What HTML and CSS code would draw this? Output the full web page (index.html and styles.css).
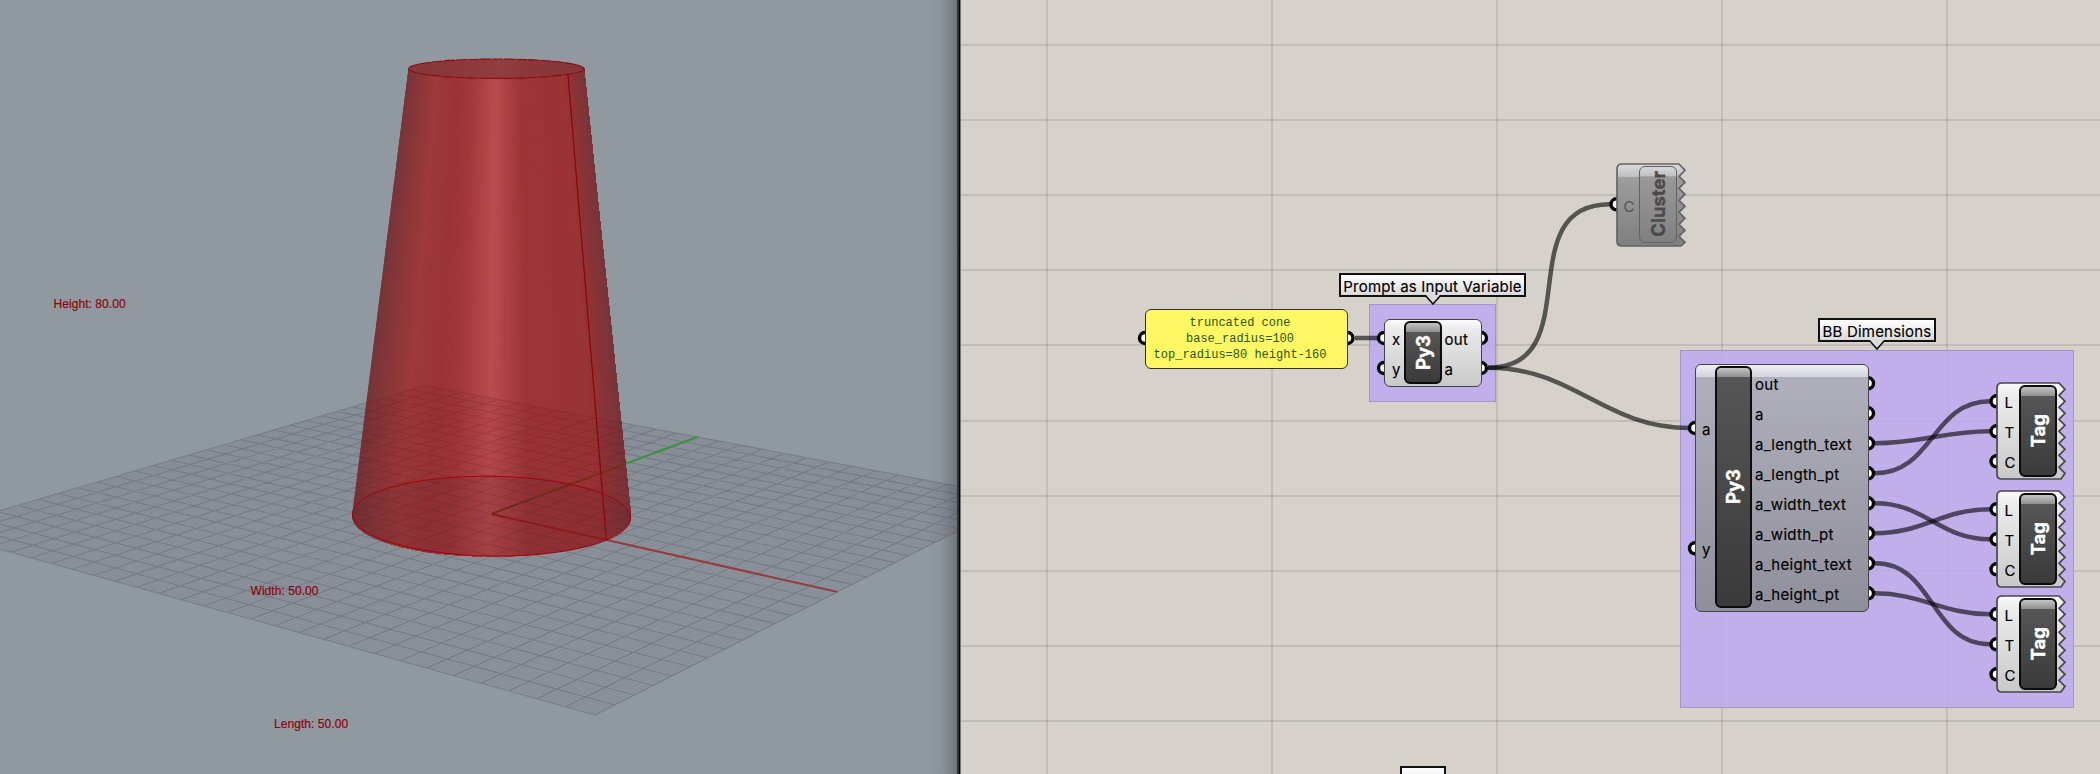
FILE: index.html
```html
<!DOCTYPE html>
<html lang="en">
<head>
<meta charset="utf-8">
<title>Viewport and node canvas</title>
<link rel="stylesheet" href="styles.css">
</head>
<body>
<main class="workspace">
  <section class="viewport">
    <svg class="scene" id="scene" width="957" height="774" viewBox="0 0 957 774">
      <defs>
        <clipPath id="coneClip"><path d="M408.5 68.5 A88 9.7 0 0 1 584 68.5 L631 516 A139.5 40.5 0 0 1 352 516 Z"/></clipPath>
        <linearGradient id="mouth" x1="0" x2="1"><stop offset="0" stop-color="#84383b"/><stop offset=".3" stop-color="#8d373a"/><stop offset=".52" stop-color="#903e41"/><stop offset=".7" stop-color="#8b373a"/><stop offset="1" stop-color="#84373a"/></linearGradient>
      </defs>
      <g id="floor"></g>
      <path id="axisX" class="axis-x"/>
      <path id="axisY" class="axis-y"/>
      <g id="shell" clip-path="url(#coneClip)"></g>
      <g clip-path="url(#coneClip)">
        <g id="floorInside" class="floor-inside"></g>
        <path id="axisXin" class="axis-x-in"/>
        <path id="axisYin" class="axis-y-in"/>
      </g>
      <ellipse cx="496.2" cy="68.7" rx="87.8" ry="9.7" fill="url(#mouth)"/>
      <path id="baseRing" class="base"/>
      <ellipse class="rim" cx="496.2" cy="68.7" rx="87.8" ry="9.7"/>
      <path class="seam" d="M568 74.5 L606.3 539.5"/>
    </svg>
    <span class="tag-text tag-height">Height: 80.00</span>
    <span class="tag-text tag-width">Width: 50.00</span>
    <span class="tag-text tag-length">Length: 50.00</span>
    <div class="edge-shadow"></div>
  </section>
  <div class="divider"></div>
  <section class="canvas">
    <svg class="layer" id="canvasGrid" width="1139" height="774" viewBox="961 0 1139 774"></svg>
    <div class="group group-prompt"></div>
    <div class="group group-dims"></div>
    <svg class="layer" id="wires" width="1139" height="774" viewBox="961 0 1139 774">
      <g class="wire">
        <path d="M1355 338H1378"/>
        <path d="M1488 367.7C1590 367.7 1508 204.3 1610 204.3"/>
        <path d="M1488 367.7C1575 367.7 1603 428 1690 428"/>
        <path d="M1875 443.3C1920 443.3 1945 431.3 1990 431.3"/>
        <path d="M1875 473.3C1933 473.3 1932 401.3 1990 401.3"/>
        <path d="M1875 503.3C1926 503.3 1939 539.3 1990 539.3"/>
        <path d="M1875 533.3C1923 533.3 1942 509.3 1990 509.3"/>
        <path d="M1875 563.3C1935 563.3 1930 644.3 1990 644.3"/>
        <path d="M1875 593.3C1921 593.3 1944 614.3 1990 614.3"/>
      </g>
      <g class="grip" id="grips"></g>
    </svg>

    <div class="callout callout-prompt">Prompt as Input Variable<svg class="tip" width="18" height="11"><path d="M1 0L9 9L17 0"/></svg></div>
    <div class="callout callout-dims">BB Dimensions<svg class="tip" width="18" height="11"><path d="M1 0L9 9L17 0"/></svg></div>
    <div class="callout callout-empty"></div>

    <div class="panel"><span>truncated cone</span><span>base_radius=100</span><span>top_radius=80 height-160</span></div>

    <div class="node node-py">
      <div class="ports ports-in"><span>x</span><span>y</span></div>
      <div class="badge"><b>Py3</b></div>
      <div class="ports ports-out"><span>out</span><span>a</span></div>
    </div>

    <div class="node node-dims">
      <div class="ports ports-in"><span>a</span><span>y</span></div>
      <div class="badge"><b>Py3</b></div>
      <div class="ports ports-out"><span>out</span><span>a</span><span>a_length_text</span><span>a_length_pt</span><span>a_width_text</span><span>a_width_pt</span><span>a_height_text</span><span>a_height_pt</span></div>
    </div>

    <div class="torn cluster">
      <svg class="torn-shape" width="71" height="85"><defs><linearGradient id="gc" x2="0" y2="1"><stop offset="0" stop-color="#dcdcdc"/><stop offset=".155" stop-color="#bebebe"/><stop offset=".155" stop-color="#9d9d9d"/><stop offset="1" stop-color="#7f7f7f"/></linearGradient></defs><path fill="url(#gc)" stroke="#646464" data-tips="7" data-h="83"/></svg>
      <div class="ports ports-in"><span>C</span></div>
      <div class="badge"><b>Cluster</b></div>
    </div>

    <div class="torn tag tag-1">
      <svg class="torn-shape" width="71" height="99"><defs><linearGradient id="gt" x2="0" y2="1"><stop offset="0" stop-color="#fbfbfb"/><stop offset=".13" stop-color="#ececec"/><stop offset="1" stop-color="#c9c9c9"/></linearGradient></defs><path fill="url(#gt)" stroke="#484848" data-tips="8" data-h="97"/></svg>
      <div class="ports ports-in"><span>L</span><span>T</span><span>C</span></div>
      <div class="badge"><b>Tag</b></div>
    </div>
    <div class="torn tag tag-2">
      <svg class="torn-shape" width="71" height="99"><path fill="url(#gt)" stroke="#484848" data-tips="8" data-h="97"/></svg>
      <div class="ports ports-in"><span>L</span><span>T</span><span>C</span></div>
      <div class="badge"><b>Tag</b></div>
    </div>
    <div class="torn tag tag-3">
      <svg class="torn-shape" width="71" height="99"><path fill="url(#gt)" stroke="#484848" data-tips="8" data-h="97"/></svg>
      <div class="ports ports-in"><span>L</span><span>T</span><span>C</span></div>
      <div class="badge"><b>Tag</b></div>
    </div>
  </section>
</main>
<script src="scene.js"></script>
</body>
</html>
```
FILE: styles.css
```css
* { box-sizing: border-box; }
body { margin: 0; overflow: hidden; font-family: Inter, "Liberation Sans", sans-serif; }
.workspace { display: flex; width: 2100px; height: 774px; }

/* 3D viewport */
.viewport { position: relative; flex: 0 0 957px; background: #9199a0; overflow: hidden; }
.scene { display: block; }
.plane { fill: #899099; fill-opacity: .75; }
.minor { fill: none; stroke: #747a84; stroke-width: 1; opacity: .1; }
.major { fill: none; stroke: #686c77; stroke-width: 1.1; opacity: .6; }
.floor-inside .plane { fill: #7a1a20; fill-opacity: .08; }
.floor-inside .minor { display: none; }
.floor-inside .major { stroke: #5a1c24; opacity: .2; }
.axis-x { stroke: #933c3d; stroke-width: 2; }
.axis-y { stroke: #3c923f; stroke-width: 2; }
.axis-x-in { stroke: #941a1d; stroke-width: 2; }
.axis-y-in { stroke: #743016; stroke-width: 2; }
.base { fill: rgba(90, 40, 48, .17); stroke: #a00408; stroke-width: 1; }
.rim { fill: none; stroke: #8f0a10; stroke-width: 1.1; stroke-dasharray: 11 1; }
.seam { stroke: #900207; stroke-width: 1.2; }
.tag-text { position: absolute; font: 12px/14px "Liberation Sans", Arial, sans-serif; color: #8c060c; -webkit-text-stroke: .2px #8c060c; letter-spacing: .06px; white-space: nowrap; }
.tag-height { left: 53.5px; top: 297px; }
.tag-width { left: 250.5px; top: 584px; }
.tag-length { left: 274px; top: 717px; }
.edge-shadow { position: absolute; inset: 0 0 0 auto; width: 30px; background: linear-gradient(90deg, rgba(70, 72, 82, 0), rgba(70, 72, 82, .1) 50%, rgba(60, 62, 72, .38)); }

.divider { flex: 0 0 4px; background: linear-gradient(90deg, #303234 2px, #000 2px, #000 3px, #77756f 3px); }

/* Node canvas: every node is placed on the free canvas */
.canvas { position: relative; flex: 1; background: #d6d2cb; overflow: hidden; }
.layer { position: absolute; left: 0; top: 0; }
#canvasGrid line { stroke: #000; stroke-opacity: .1; stroke-width: 2; }
.group { position: absolute; background: rgba(189, 170, 238, .88); border: 1.5px solid #a294c4; }
.group-prompt { left: 408px; top: 304px; width: 127px; height: 98px; }
.group-dims { left: 719px; top: 349.5px; width: 394px; height: 358.5px; }
.wire path { fill: none; stroke: #000; stroke-opacity: .6; stroke-width: 4.5; }
.grip circle { fill: #fff; stroke: #000; stroke-width: 3.4; }

.callout { position: absolute; display: flex; align-items: center; justify-content: center; height: 24px; padding-top: 3px; border: 2px solid #111; background: linear-gradient(#fff, #d9d9d9); font-size: 15px; letter-spacing: .2px; color: #000; -webkit-text-stroke: .15px #000; white-space: nowrap; }
.callout-prompt { left: 378px; top: 273px; width: 187px; }
.callout-dims { left: 857px; top: 318px; width: 118px; }
.callout-empty { left: 439px; top: 766px; width: 46px; }
.tip { position: absolute; left: 50%; top: 20px; margin-left: -9px; }
.tip path { fill: #dcdcdc; stroke: #111; stroke-width: 1.6; }

.panel { position: absolute; left: 184px; top: 309px; width: 203px; height: 59.5px; display: flex; flex-direction: column; align-items: center; padding: 4.5px 13px 0 0; border: 1.5px solid #33321c; border-radius: 6px; background: #fff763; font: 12px/16.4px "Liberation Mono", "Courier New", monospace; color: #2b5712; white-space: pre; }

.node { position: absolute; display: flex; border: 1.6px solid #444; border-radius: 6px; }
.node-py { left: 423px; top: 319px; width: 97.5px; height: 68px; background: linear-gradient(#fbfbfb, #e9e9e9 17%, #c9c9c9); }
.node-dims { left: 733.5px; top: 364px; width: 174px; height: 248px; background: linear-gradient(#efeff4 0, #d3d3dc 12px, #b0b0bd 12px, #8f8f9c); }
.ports { display: flex; flex-direction: column; font-size: 15px; color: #000; letter-spacing: .28px; -webkit-text-stroke: .15px currentColor; }
.ports span { height: 30px; line-height: 30px; }
.node-py .ports-in { width: 19px; padding: 5px 0 0 7px; }
.node-py .ports-out { padding: 5px 0 0 3px; }
.node-dims .ports-in { width: 19px; padding: 50px 0 0 6.5px; gap: 90px; }
.node-dims .ports-out { padding: 5px 0 0 3px; }
.badge { flex: none; display: flex; align-items: center; justify-content: center; width: 37.5px; border: 2px solid #0c0c0c; border-radius: 6px; background: linear-gradient(#c4c4c4 0, #8f8f8f 9px, #565656 9px, #3a3a3a); }
.badge b { writing-mode: vertical-rl; transform: rotate(180deg); font-size: 18.5px; line-height: 22px; font-weight: 700; -webkit-text-stroke: .4px currentColor; color: #fff; }
.node-py .badge { height: 63px; margin-top: 1px; }
.node-dims .badge { height: 242px; margin-top: 1px; }

.torn { position: absolute; display: flex; }
.torn-shape { position: absolute; left: 0; top: 0; }
.torn-shape path { stroke-width: 1.7; }
.torn .ports, .torn .badge { position: relative; }
.torn .ports-in { width: 23px; padding: 6px 0 0 8.5px; }
.torn .badge { height: 91.5px; margin-top: 3px; }
.tag { left: 1035px; height: 99px; }
.tag-1 { top: 382px; }
.tag-2 { top: 490px; }
.tag-3 { top: 595px; }
.cluster { left: 655px; top: 162.5px; height: 85px; }
.torn.cluster .ports-in { padding: 29px 0 0 7.5px; color: #555; }
.torn.cluster .badge { height: 77px; border: 1.5px solid #626262; background: linear-gradient(#d8d8d8 0, #c0c0c0 9px, rgba(150, 150, 150, .6) 9px, rgba(128, 128, 128, .6)); }
.cluster .badge b { color: #4b4b4b; font-size: 18.5px; }
```
FILE: scene.js
```js
const NS = 'http://www.w3.org/2000/svg';
const byId = id => document.getElementById(id);
function add(parent, name, attrs) {
  const el = document.createElementNS(NS, name);
  for (const key in attrs) el.setAttribute(key, attrs[key]);
  parent.appendChild(el);
  return el;
}

// Projection of the unit square onto the ground plane corners.
const p0 = [-67, 530.4], p1 = [595, 715], p2 = [1021.4, 498.3], p3 = [425, 385.5];
const dx1 = p1[0] - p2[0], dx2 = p3[0] - p2[0], sx = p0[0] - p1[0] + p2[0] - p3[0];
const dy1 = p1[1] - p2[1], dy2 = p3[1] - p2[1], sy = p0[1] - p1[1] + p2[1] - p3[1];
const det = dx1 * dy2 - dx2 * dy1;
const g = (sx * dy2 - dx2 * sy) / det, h = (dx1 * sy - sx * dy1) / det;
const A = p1[0] - p0[0] + g * p1[0], B = p3[0] - p0[0] + h * p3[0];
const D = p1[1] - p0[1] + g * p1[1], E = p3[1] - p0[1] + h * p3[1];
function project(x, y) {
  const u = (x + 70) / 140, v = (y + 70) / 140, w = g * u + h * v + 1;
  return ((A * u + B * v + p0[0]) / w).toFixed(2) + ' ' + ((D * u + E * v + p0[1]) / w).toFixed(2);
}
// p0->p1 runs along x, p0->p3 along y
let minor = '', major = '';
for (let i = -70; i <= 70; i++) {
  const seg = `M${project(i, -70)}L${project(i, 70)}M${project(-70, i)}L${project(70, i)}`;
  if (i % 5 === 0) major += seg; else minor += seg;
}
const outline = `M${project(-70, -70)}L${project(70, -70)}L${project(70, 70)}L${project(-70, 70)}Z`;
for (const id of ['floor', 'floorInside']) {
  add(byId(id), 'path', { d: outline, class: 'plane' });
  add(byId(id), 'path', { d: minor, class: 'minor' });
  add(byId(id), 'path', { d: major, class: 'major' });
}
const axX = `M${project(0, 0)}L${project(70, 0)}`, axY = `M${project(0, 0)}L${project(0, 70)}`;
byId('axisX').setAttribute('d', axX);
byId('axisXin').setAttribute('d', axX);
byId('axisY').setAttribute('d', axY);
byId('axisYin').setAttribute('d', axY);

let ring = '';
for (let k = 0; k < 120; k++) {
  const t = k * Math.PI / 60;
  ring += (k ? 'L' : 'M') + project(25 * Math.cos(t), 25 * Math.sin(t));
}
byId('baseRing').setAttribute('d', ring + 'Z');

// Shading bands that converge towards the top of the cone.
const ramp = [[0, 116, 53, 57], [.09, 140, 55, 58], [.17, 157, 58, 59], [.28, 155, 52, 55], [.36, 160, 56, 58], [.43, 174, 67, 70], [.49, 184, 77, 80], [.55, 172, 66, 69], [.63, 156, 53, 55], [.86, 155, 52, 54], [.93, 136, 52, 55], [1, 116, 54, 59]];
const bands = 160;
for (let i = 0; i < bands; i++) {
  const t = i / bands;
  let k = 0;
  while (ramp[k + 1][0] < t) k++;
  const a = ramp[k], b = ramp[k + 1], f = (t - a[0]) / (b[0] - a[0]);
  const c = [1, 2, 3].map(n => Math.round(a[n] + (b[n] - a[n]) * f));
  const top = 407.3 + 178 * t, bottom = 346 + 291 * t;
  add(byId('shell'), 'path', { d: `M${top} 55L586 55L640 560L${bottom} 560Z`, fill: `rgb(${c})` });
}

// Canvas grid
for (let x = 1047; x < 2100; x += 225) add(byId('canvasGrid'), 'line', { x1: x, x2: x, y1: 0, y2: 774 });
for (let n = 0; n < 10; n++) {
  const y = Math.round(45 + 75.1 * n);
  add(byId('canvasGrid'), 'line', { x1: 961, x2: 2100, y1: y, y2: y });
}

// Connection grips, half hidden by the node bodies
const grips = [[1145, 338], [1347.5, 338], [1384, 338], [1384, 368], [1481, 338], [1481, 368], [1616.5, 204.3], [1695, 428], [1695, 548.3]];
for (let n = 0; n < 8; n++) grips.push([1868, 383.3 + 30 * n]);
for (const y of [401.3, 509.3, 614.3]) for (let n = 0; n < 3; n++) grips.push([1996.5, y + 30 * n]);
for (const [cx, cy] of grips) add(byId('grips'), 'circle', { cx, cy, r: 5.5 });

// Bodies with a torn right-hand edge
for (const p of document.querySelectorAll('[data-tips]')) {
  const H = +p.dataset.h, tips = +p.dataset.tips;
  let d = 'M63 1';
  for (let i = 0; i < tips; i++) d += `L69 ${7.3 + 12 * i}` + (i < tips - 1 ? `L63 ${13.3 + 12 * i}` : '');
  p.setAttribute('d', d + `L${65} ${H}H6Q1 ${H} 1 ${H - 5}V6Q1 1 6 1Z`);
}
```
